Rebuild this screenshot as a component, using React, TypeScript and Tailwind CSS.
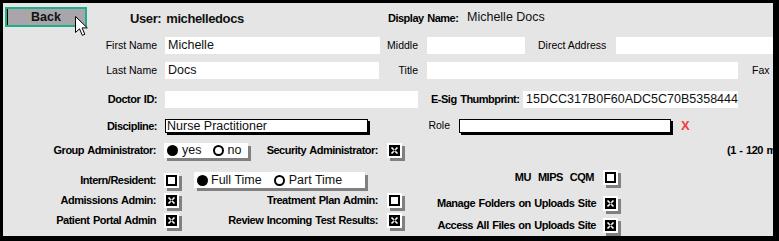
import React from "react";

const bl = "text-[11px] font-bold tracking-[-0.5px] [word-spacing:1px] text-black whitespace-nowrap";
const nl = "text-[10.5px] text-black whitespace-nowrap";
const inp = "h-[17px] shrink-0 bg-white pl-[3px] text-[12.5px] leading-[17px] text-[#111] whitespace-nowrap overflow-hidden";

function Check({ checked }: { checked?: boolean }) {
  return (
    <span className="flex h-[15px] w-[15px] shrink-0 items-center justify-center bg-white shadow-[3px_3px_0_#808080]">
      {checked ? (
        <svg width="11" height="11" viewBox="0 0 11 11">
          <rect width="11" height="11" fill="#000" />
          <path d="M2.5 2.5L8.5 8.5M8.5 2.5L2.5 8.5" stroke="#fff" strokeWidth="1.6" />
          <rect x="4.6" y="4.6" width="1.8" height="1.8" fill="#000" />
        </svg>
      ) : (
        <span className="h-[11px] w-[11px] border-2 border-black" />
      )}
    </span>
  );
}

function Radio({ on }: { on?: boolean }) {
  return on ? (
    <span className="h-[11px] w-[11px] shrink-0 rounded-full bg-black" />
  ) : (
    <span className="h-[11px] w-[11px] shrink-0 rounded-full border-2 border-black" />
  );
}

function LeftRow({ label, checked }: { label: string; checked?: boolean }) {
  return (
    <div className="flex h-[15px] items-center">
      <div className={`w-[153px] text-right ${bl}`}>{label}</div>
      <div className="ml-[8px]">
        <Check checked={checked} />
      </div>
    </div>
  );
}

function EndRow({ label, checked, gap }: { label: React.ReactNode; checked?: boolean; gap: string }) {
  return (
    <div className="flex h-[15px] items-center justify-end">
      <div className={bl}>{label}</div>
      <div className={gap}>
        <Check checked={checked} />
      </div>
    </div>
  );
}

export default function App() {
  return (
    <div className="h-[241px] w-[779px] overflow-hidden bg-black pl-[3px] pt-[3px] font-['Liberation_Sans',Arial,sans-serif]">
      <div className="relative flex h-[233px] w-[770px] flex-col overflow-hidden bg-[#e5e5e5]">
        {/* header */}
        <div className="mt-[4px] flex h-[20px] items-center pl-[2px]">
          <div className="flex h-[20px] w-[82px] shrink-0 items-center justify-center border-2 border-[#1fae8c] bg-[#a8a6aa] text-[12.5px] font-bold text-[#111] shadow-[inset_1px_0_0_#000]">
            Back
          </div>
          <div className="ml-[43px] flex w-[258px] shrink-0 items-center pt-[4px] text-[13px] font-bold tracking-[-0.4px] text-[#111]">
            <span>User:</span>
            <span className="ml-[5px]">michelledocs</span>
          </div>
          <div className={`w-[79px] shrink-0 pt-[2px] ${bl}`}>Display Name:</div>
          <div className="pt-[1px] text-[12.5px] text-[#111] whitespace-nowrap">Michelle Docs</div>
        </div>

        {/* row 1 */}
        <div className="mt-[10px] flex h-[17px] items-center">
          <div className={`w-[154px] shrink-0 text-right ${nl}`}>First Name</div>
          <div className={`ml-[8px] w-[215px] ${inp}`}>Michelle</div>
          <div className={`w-[38px] shrink-0 text-right ${nl}`}>Middle</div>
          <div className={`ml-[9px] w-[98px] ${inp}`}></div>
          <div className={`ml-[13px] w-[78px] shrink-0 ${nl}`}>Direct Address</div>
          <div className={`w-[200px] ${inp}`}></div>
        </div>

        {/* row 2 */}
        <div className="mt-[8px] flex h-[17px] items-center">
          <div className={`w-[154px] shrink-0 text-right ${nl}`}>Last Name</div>
          <div className={`ml-[8px] w-[214px] ${inp}`}>Docs</div>
          <div className={`w-[39px] shrink-0 text-right ${nl}`}>Title</div>
          <div className={`ml-[9px] w-[311px] ${inp}`}></div>
          <div className={`ml-[14px] ${nl}`}>Fax</div>
        </div>

        {/* row 3 */}
        <div className="mt-[12px] flex h-[17px] items-center">
          <div className={`w-[154px] shrink-0 text-right ${bl}`}>Doctor ID:</div>
          <div className={`ml-[8px] w-[253px] ${inp}`}></div>
          <div className={`ml-[13px] w-[87px] shrink-0 text-right ${bl}`}>E-Sig Thumbprint:</div>
          <div className={`ml-[5px] w-[215px] ${inp}`}>15DCC317B0F60ADC5C70B5358444</div>
        </div>

        {/* row 4 */}
        <div className="mt-[11px] flex h-[14px] items-center">
          <div className={`w-[154px] shrink-0 text-right ${bl}`}>Discipline:</div>
          <div className="ml-[8px] h-[14px] w-[203px] shrink-0 overflow-hidden whitespace-nowrap border border-black bg-white pl-[1px] text-[12.5px] leading-[13px] text-[#111] shadow-[2px_2px_0_#000]">
            Nurse Practitioner
          </div>
          <div className={`w-[82px] shrink-0 text-right ${nl}`}>Role</div>
          <div className="ml-[9px] h-[14px] w-[212px] shrink-0 border border-black bg-white shadow-[2px_2px_0_#000]" />
          <div className="ml-[10px] text-[13px] font-bold leading-[14px] text-[#f03c3c]">X</div>
        </div>

        {/* row 5 */}
        <div className="mt-[10px] flex h-[15px] items-center">
          <div className={`w-[153px] shrink-0 text-right ${bl}`}>Group Administrator:</div>
          <div className="ml-[8px] flex h-[15px] w-[84px] shrink-0 items-center bg-white pl-[3px] text-[12.5px] text-[#111] shadow-[3px_3px_0_#808080]">
            <Radio on />
            <span className="ml-[4px]">yes</span>
            <span className="ml-[12px] flex items-center">
              <Radio />
            </span>
            <span className="ml-[3px]">no</span>
          </div>
          <div className={`w-[130px] shrink-0 text-right ${bl}`}>Security Administrator:</div>
          <div className="ml-[9px]">
            <Check checked />
          </div>
          <div className={`ml-[325px] ${bl}`}>(1 - 120 m</div>
        </div>

        {/* bottom three columns */}
        <div className="flex items-start">
          <div className="mt-[15px] flex w-[191px] shrink-0 flex-col gap-[5px]">
            <LeftRow label="Intern/Resident:" />
            <LeftRow label="Admissions Admin:" checked />
            <LeftRow label="Patient Portal Admin" checked />
          </div>

          <div className="mt-[14px] flex w-[211px] shrink-0 flex-col pr-[3px]">
            <div className="flex h-[16px] w-[171px] items-center bg-white pl-[3px] text-[12.5px] text-[#111] shadow-[3px_3px_0_#808080]">
              <Radio on />
              <span className="ml-[3px] whitespace-nowrap">Full Time</span>
              <span className="ml-[12px] flex items-center">
                <Radio />
              </span>
              <span className="ml-[4px] whitespace-nowrap">Part Time</span>
            </div>
            <div className="mt-[5px]">
              <EndRow label="Treatment Plan Admin:" gap="ml-[9px]" />
            </div>
            <div className="mt-[5px]">
              <EndRow label="Review Incoming Test Results:" checked gap="ml-[9px]" />
            </div>
          </div>

          <div className="mt-[12px] flex w-[216px] shrink-0 flex-col pr-[3px]">
            <EndRow
              label={
                <span className="flex gap-[7px]">
                  <span>MU</span>
                  <span>MIPS</span>
                  <span>CQM</span>
                </span>
              }
              gap="ml-[9px]"
            />
            <div className="mt-[11px]">
              <EndRow label="Manage Folders on Uploads Site" checked gap="ml-[7px]" />
            </div>
            <div className="mt-[7px]">
              <EndRow label="Access All Files on Uploads Site" checked gap="ml-[7px]" />
            </div>
          </div>
        </div>

        {/* mouse cursor overlay */}
        <svg className="absolute left-[72px] top-[13px]" width="14" height="21" viewBox="0 0 14 21">
          <path
            d="M0.5 0.5 L0.5 16.5 L4.5 12.8 L7.3 19.3 L9.8 18.3 L7.1 11.9 L12.3 11.9 Z"
            fill="#fff"
            stroke="#000"
            strokeWidth="1"
            strokeLinejoin="miter"
          />
        </svg>
      </div>
    </div>
  );
}
